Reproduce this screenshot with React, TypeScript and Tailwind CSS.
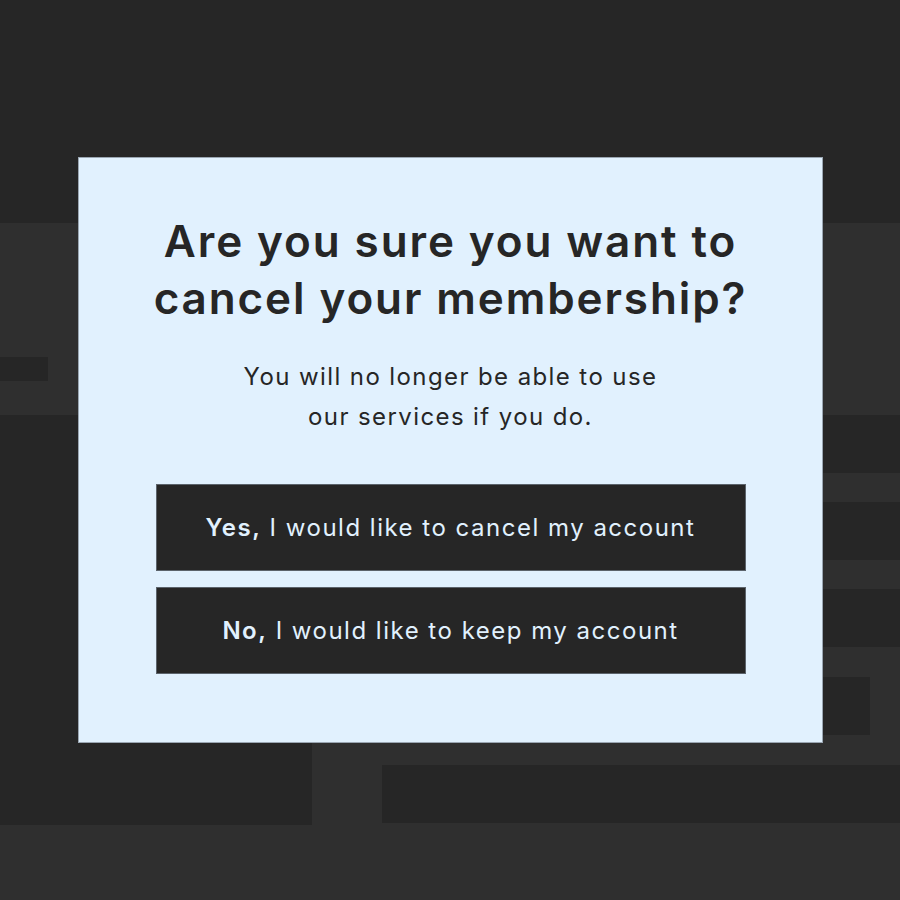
import { useState } from 'react';

const font = { fontFamily: 'Inter, "Liberation Sans", sans-serif' };

function Backdrop() {
  return (
    <div className="w-full h-[900px] bg-[#2f2f2f] flex flex-col">
      <div className="h-[223px] bg-[#262626]" />
      <div className="h-[192px] pt-[134px]">
        <div className="w-[48px] h-[24px] bg-[#262626]" />
      </div>
      <div className="flex flex-row h-[410px]">
        <div className="w-[312px] bg-[#262626]" />
        <div className="flex-1 flex flex-col">
          <div className="h-[58px] bg-[#262626]" />
          <div className="h-[29px]" />
          <div className="h-[58px] bg-[#262626]" />
          <div className="h-[29px]" />
          <div className="h-[58px] bg-[#262626]" />
          <div className="h-[30px]" />
          <div className="h-[58px] pr-[30px] flex justify-end">
            <div className="w-[300px] bg-[#262626]" />
          </div>
          <div className="h-[30px]" />
          <div className="h-[58px] pl-[70px]">
            <div className="h-full bg-[#262626]" />
          </div>
        </div>
      </div>
    </div>
  );
}

export default function App() {
  const [choice, setChoice] = useState<string | undefined>(undefined);

  return (
    <div className="relative w-full h-[900px] overflow-hidden" style={font}>
      <Backdrop />
      <div className="absolute left-[78px] top-[157px] w-[745px] h-[586px] bg-[#e1f1fe] border border-[#9aa6b2] flex flex-col items-center px-[40px] pt-[55px]">
        <h1 className="text-[44px] leading-[57px] font-semibold text-[#262626] text-center tracking-[1.9px] whitespace-nowrap">
          Are you sure you want to
          <br />
          cancel your membership?
        </h1>
        <p className="mt-[30px] text-[24px] leading-[40px] text-[#262626] text-center tracking-[1.4px] whitespace-nowrap">
          You will no longer be able to use
          <br />
          our services if you do.
        </p>
        <div className="mt-[47px] w-[590px] flex flex-col gap-[16px]">
          <button
            className="h-[87px] w-full bg-[#262626] border border-[#5b636b] text-[#e1f1fe] text-[24px] tracking-[1.5px]"
            onClick={() => setChoice('cancel')}
          >
            <span className="font-semibold">Yes,</span> I would like to cancel my account
          </button>
          <button
            className="h-[87px] w-full bg-[#262626] border border-[#5b636b] text-[#e1f1fe] text-[24px] tracking-[1.5px]"
            onClick={() => setChoice('keep')}
          >
            <span className="font-semibold">No,</span> I would like to keep my account
          </button>
        </div>
        {choice && <span className="sr-only">{choice}</span>}
      </div>
    </div>
  );
}
